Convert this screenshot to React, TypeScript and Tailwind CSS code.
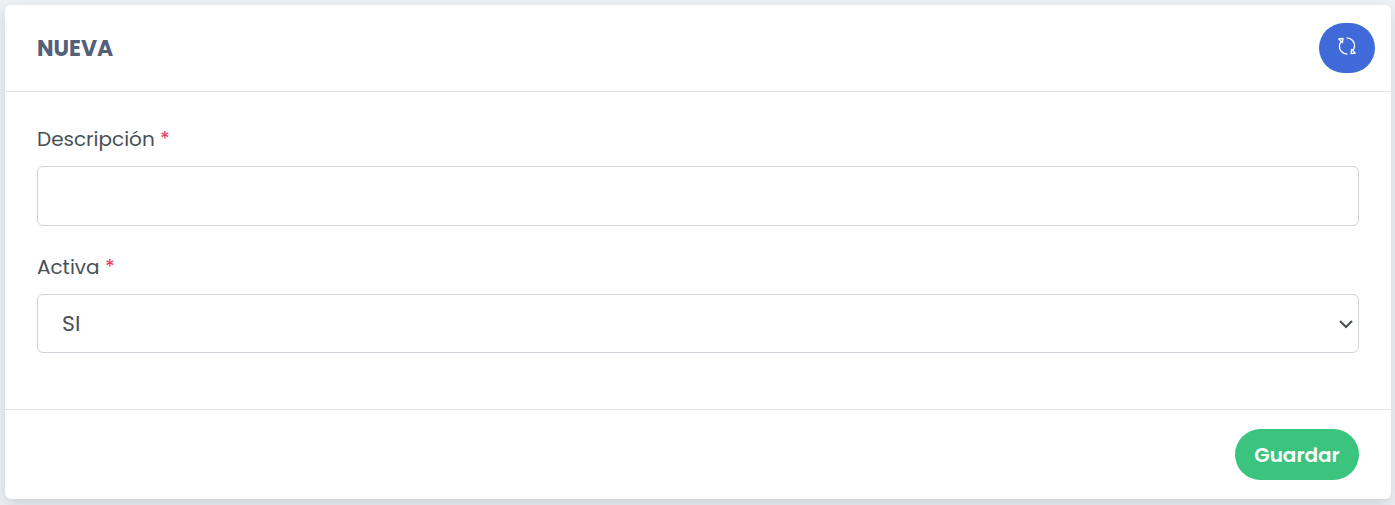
import React, { useState } from 'react';

const RefreshIcon = () => (
  <svg
    className="-mt-1 h-5 w-5"
    viewBox="0 0 20 20"
    fill="none"
    stroke="currentColor"
    strokeWidth="1.3"
    strokeLinejoin="round"
    aria-hidden="true"
  >
    <path d="M9.500 1.900c5-.1 8.600 4 8 8.800-.2 1.400-.7 2.500-1.500 3.500" />
    <path d="M10.500 18.100c-5 .1-8.600-4-8-8.800.2-1.400.7-2.500 1.500-3.500" />
    <path d="M1.700 2.900l4.300-.4-.6 4.200z" />
    <path d="M18.300 17.100l-4.300.4.6-4.200z" />
  </svg>
);

export default function App() {
  const [descripcion, setDescripcion] = useState('');
  const [activa, setActiva] = useState('SI');

  const handleReset = () => {
    setDescripcion('');
    setActiva('SI');
  };

  return (
    <div className="min-h-screen bg-[#eef2f5] p-[5px] pr-1 font-['Poppins','Inter',sans-serif] text-[#495057]">
      <form
        className="rounded-md bg-white shadow-[0_6px_16px_rgba(70,80,95,0.2)]"
        onSubmit={(e) => e.preventDefault()}
      >
        <div className="flex items-center justify-between border-b border-[#e0e3e8] py-[18px] pr-4 pl-8">
          <h1 className="text-[22px] font-bold text-[#545f7a]">NUEVA</h1>
          <button
            type="button"
            aria-label="Limpiar"
            className="flex h-[50px] w-14 items-center justify-center rounded-full bg-[#3f6ad8] text-white"
            onClick={handleReset}
          >
            <RefreshIcon />
          </button>
        </div>

        <div className="px-8 pt-8 pb-14">
          <div className="mb-[26px]">
            <label htmlFor="descripcion" className="mb-3 block text-[20px] leading-[30px]">
              Descripción <span className="text-[#e8345f]">*</span>
            </label>
            <input
              id="descripcion"
              type="text"
              className="block h-[60px] w-full rounded-md border border-[#ced4da] px-6 text-[22px] outline-none"
              value={descripcion}
              onChange={(e) => setDescripcion(e.target.value)}
            />
          </div>
          <div>
            <label htmlFor="activa" className="mb-3 block text-[20px] leading-[30px]">
              Activa <span className="text-[#e8345f]">*</span>
            </label>
            <div className="relative">
              <select
                id="activa"
                className="block h-[59px] w-full appearance-none rounded-md border border-[#ced4da] bg-white px-6 text-[22px] outline-none"
                value={activa}
                onChange={(e) => setActiva(e.target.value)}
              >
                <option value="SI">SI</option>
                <option value="NO">NO</option>
              </select>
              <svg
                className="pointer-events-none absolute top-1/2 right-[5px] h-4 w-4 -translate-y-1/2"
                viewBox="0 0 16 16"
                fill="none"
                stroke="currentColor"
                strokeWidth="2.2"
                aria-hidden="true"
              >
                <path d="M2 5l6 6 6-6" />
              </svg>
            </div>
          </div>
        </div>

        <div className="flex justify-end border-t border-[#e0e3e8] px-8 py-[19px]">
          <button
            type="submit"
            className="h-[51px] w-[124px] rounded-full bg-[#3ac47d] text-[20px] font-semibold text-white"
          >
            Guardar
          </button>
        </div>
      </form>
    </div>
  );
}
